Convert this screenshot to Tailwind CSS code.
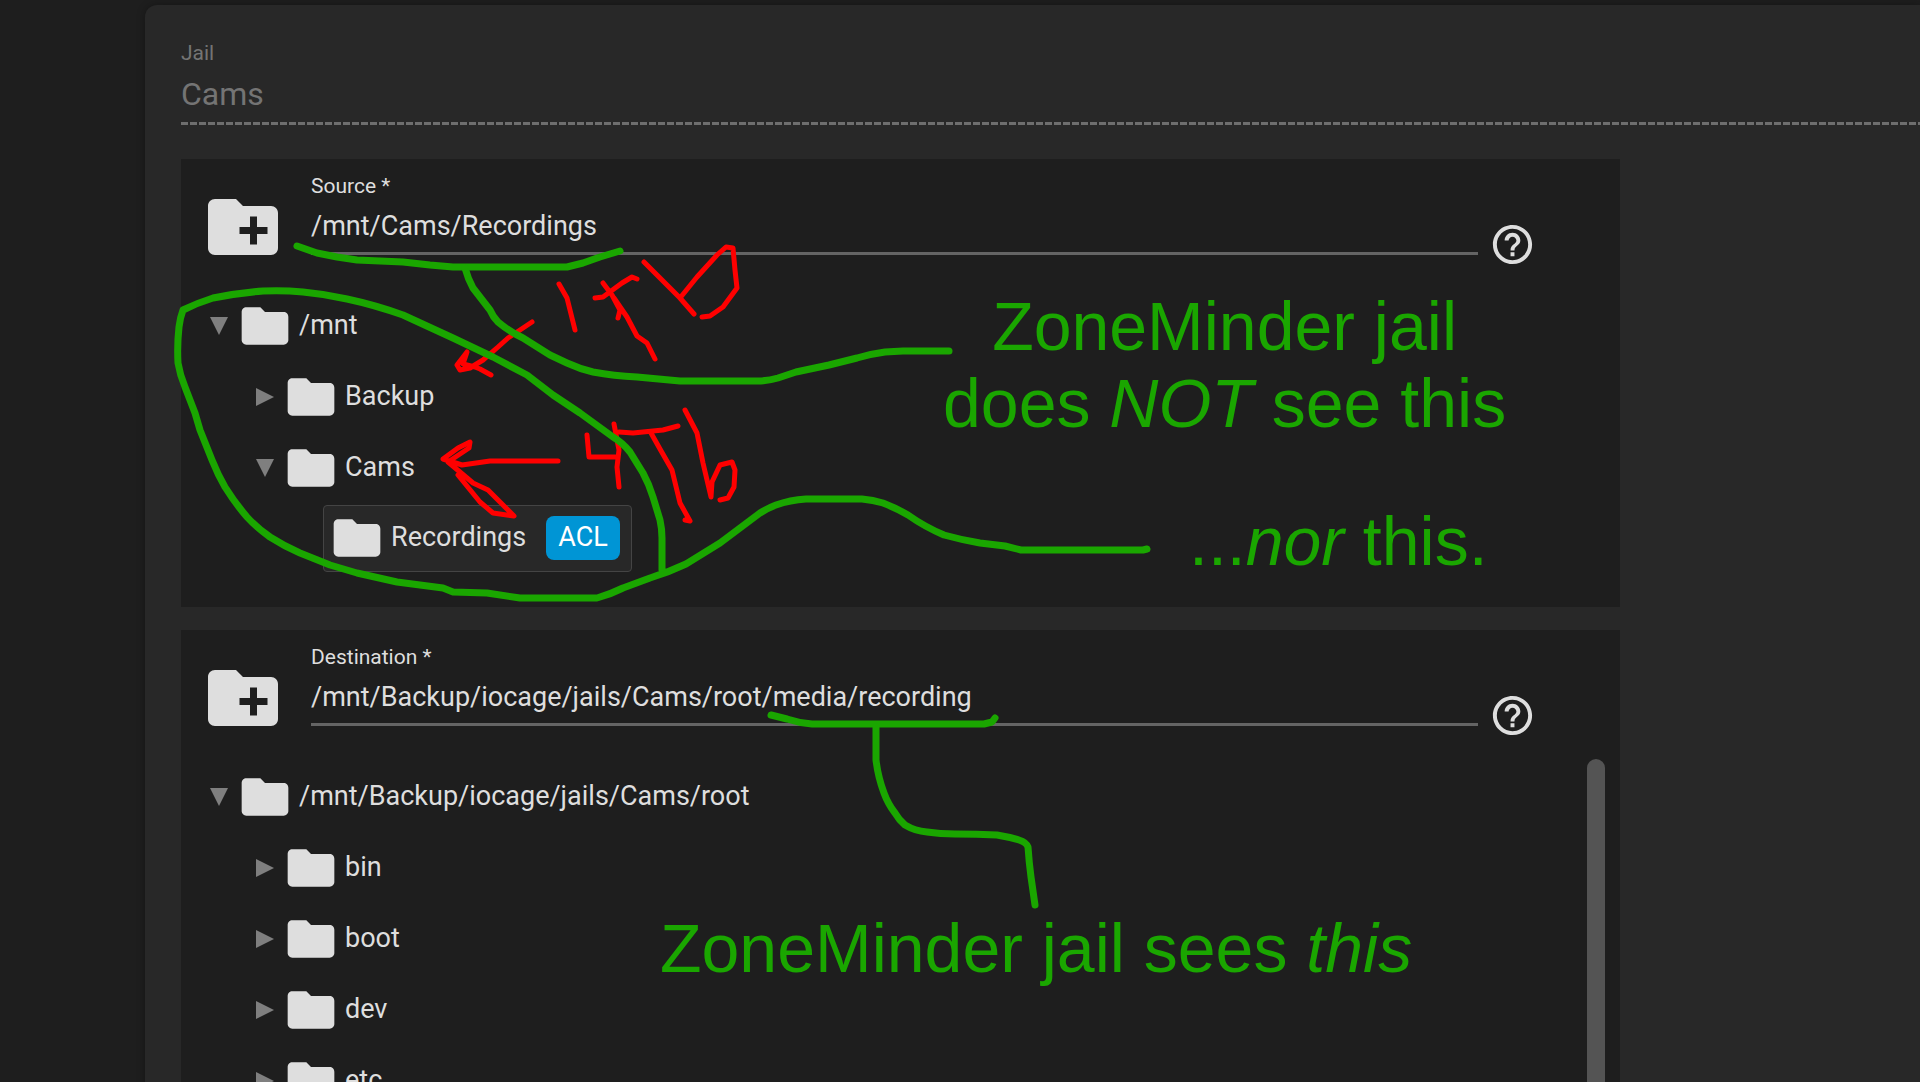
<!DOCTYPE html>
<html lang="en">
<head>
    <meta charset="UTF-8">
    <meta name="viewport" content="width=device-width, initial-scale=1.0">
    <title>Jail Mount Points</title>
    <script src="https://cdn.jsdelivr.net/npm/@tailwindcss/browser@4"></script>
    <style>
        body {
            font-family: Roboto, 'Noto Sans', sans-serif;
        }
    </style>
</head>
<body class="relative h-screen overflow-hidden bg-[#1e1e1e] text-[#dedede]">
    <!-- Shared icons -->
    <svg class="hidden">
        <symbol id="folder" viewBox="0 0 24 24"><path d="M10 4H4c-1.1 0-2 .9-2 2v12c0 1.1.9 2 2 2h16c1.1 0 2-.9 2-2V8c0-1.1-.9-2-2-2h-8l-2-2z"/></symbol>
        <symbol id="folder-add" viewBox="0 0 24 24"><path d="M20 6h-8l-2-2H4c-1.11 0-2 .89-2 2v12c0 1.11.89 2 2 2h16c1.11 0 2-.89 2-2V8c0-1.11-.89-2-2-2zm-1 8h-3v3h-2v-3h-3v-2h3V9h2v3h3v2z"/></symbol>
        <symbol id="help" viewBox="0 0 24 24"><path d="M11 18h2v-2h-2v2zm1-16C6.48 2 2 6.48 2 12s4.48 10 10 10 10-4.48 10-10S17.52 2 12 2zm0 18c-4.41 0-8-3.59-8-8s3.59-8 8-8 8 3.59 8 8-3.59 8-8 8zm0-14c-2.21 0-4 1.79-4 4h2c0-1.1.9-2 2-2s2 .9 2 2c0 2-3 1.75-3 5h2c0-2.25 3-2.5 3-5 0-2.21-1.79-4-4-4z"/></symbol>
        <symbol id="open" viewBox="0 0 18 18"><path d="M0 0h18L9 18z"/></symbol>
        <symbol id="closed" viewBox="0 0 18 18"><path d="M0 0v18l18-9z"/></symbol>
    </svg>

    <main class="mt-[5px] ml-[145px] min-h-screen rounded-tl-xl bg-[#282828] pt-9 pl-9 shadow-[0_0_8px_rgba(0,0,0,0.3)]">
        <!-- Jail -->
        <div class="flex flex-col">
            <label for="jail" class="text-[21px] leading-6 text-[#747474]">Jail</label>
            <input id="jail" type="text" value="Cams" disabled class="mt-[9px] mb-2 h-10 w-full bg-transparent text-[32px] leading-10 text-[#747474]">
            <div class="h-[3px] bg-[repeating-linear-gradient(to_right,#6e6e6e_0_7px,transparent_7px_9px)]"></div>
        </div>

        <!-- Source -->
        <section class="mt-[34px] w-full max-w-[1439px] bg-[#1e1e1e] pt-[15px] pb-[35px]">
            <div class="flex items-start pr-[84px] pl-5">
                <button type="button" aria-label="Browse source" class="mt-[11px]"><svg class="size-[84px] fill-current"><use href="#folder-add"/></svg></button>
                <div class="ml-[26px] flex flex-1 flex-col">
                    <label for="source" class="text-[21px] leading-6">Source *</label>
                    <input id="source" type="text" value="/mnt/Cams/Recordings" class="mt-[10px] h-[47px] w-full border-b-3 border-[#646464] bg-transparent pb-2 text-[27px] leading-9 outline-none">
                </div>
                <button type="button" aria-label="Help" class="mt-[47px] ml-[11px]"><svg class="size-[47px] fill-current"><use href="#help"/></svg></button>
            </div>
            <ul class="mt-[23px] flex flex-col gap-1 pl-[26px] text-[27px]">
                <li class="flex h-[67px] items-center">
                    <button type="button" aria-label="Collapse" class="flex w-6 justify-center text-[#7f7f7f]"><svg class="size-[18px] fill-current"><use href="#open"/></svg></button>
                    <div class="flex items-center gap-[6px] px-[6px]"><svg class="size-14 fill-current"><use href="#folder"/></svg><span>/mnt</span></div>
                </li>
                <li class="flex h-[67px] items-center pl-[46px]">
                    <button type="button" aria-label="Expand" class="flex w-6 justify-center text-[#7f7f7f]"><svg class="size-[18px] fill-current"><use href="#closed"/></svg></button>
                    <div class="flex items-center gap-[6px] px-[6px]"><svg class="size-14 fill-current"><use href="#folder"/></svg><span>Backup</span></div>
                </li>
                <li class="flex h-[67px] items-center pl-[46px]">
                    <button type="button" aria-label="Collapse" class="flex w-6 justify-center text-[#7f7f7f]"><svg class="size-[18px] fill-current"><use href="#open"/></svg></button>
                    <div class="flex items-center gap-[6px] px-[6px]"><svg class="size-14 fill-current"><use href="#folder"/></svg><span>Cams</span></div>
                </li>
                <li class="flex h-[67px] items-center pl-[116px]">
                    <div class="flex h-full items-center gap-[6px] rounded-sm border border-[#444444] bg-[#282828] pr-[11px] pb-[2px] pl-[5px]">
                        <svg class="size-14 fill-current"><use href="#folder"/></svg>
                        <span>Recordings</span>
                        <span class="ml-[14px] flex h-11 items-center rounded-lg bg-[#0095d5] px-3 text-white">ACL</span>
                    </div>
                </li>
            </ul>
        </section>

        <!-- Destination -->
        <section class="mt-[23px] w-full max-w-[1439px] bg-[#1e1e1e] pt-[15px]">
            <div class="flex items-start pr-[84px] pl-5">
                <button type="button" aria-label="Browse destination" class="mt-[11px]"><svg class="size-[84px] fill-current"><use href="#folder-add"/></svg></button>
                <div class="ml-[26px] flex flex-1 flex-col">
                    <label for="destination" class="text-[21px] leading-6">Destination *</label>
                    <input id="destination" type="text" value="/mnt/Backup/iocage/jails/Cams/root/media/recording" class="mt-[10px] h-[47px] w-full border-b-3 border-[#646464] bg-transparent pb-2 text-[27px] leading-9 outline-none">
                </div>
                <button type="button" aria-label="Help" class="mt-[47px] ml-[11px]"><svg class="size-[47px] fill-current"><use href="#help"/></svg></button>
            </div>
            <div class="mt-[19px] flex">
                <ul class="flex flex-1 flex-col gap-1 pt-1 pl-[26px] text-[27px]">
                    <li class="flex h-[67px] items-center">
                        <button type="button" aria-label="Collapse" class="flex w-6 justify-center text-[#7f7f7f]"><svg class="size-[18px] fill-current"><use href="#open"/></svg></button>
                        <div class="flex items-center gap-[6px] px-[6px]"><svg class="size-14 fill-current"><use href="#folder"/></svg><span>/mnt/Backup/iocage/jails/Cams/root</span></div>
                    </li>
                    <li class="flex h-[67px] items-center pl-[46px]">
                        <button type="button" aria-label="Expand" class="flex w-6 justify-center text-[#7f7f7f]"><svg class="size-[18px] fill-current"><use href="#closed"/></svg></button>
                        <div class="flex items-center gap-[6px] px-[6px]"><svg class="size-14 fill-current"><use href="#folder"/></svg><span>bin</span></div>
                    </li>
                    <li class="flex h-[67px] items-center pl-[46px]">
                        <button type="button" aria-label="Expand" class="flex w-6 justify-center text-[#7f7f7f]"><svg class="size-[18px] fill-current"><use href="#closed"/></svg></button>
                        <div class="flex items-center gap-[6px] px-[6px]"><svg class="size-14 fill-current"><use href="#folder"/></svg><span>boot</span></div>
                    </li>
                    <li class="flex h-[67px] items-center pl-[46px]">
                        <button type="button" aria-label="Expand" class="flex w-6 justify-center text-[#7f7f7f]"><svg class="size-[18px] fill-current"><use href="#closed"/></svg></button>
                        <div class="flex items-center gap-[6px] px-[6px]"><svg class="size-14 fill-current"><use href="#folder"/></svg><span>dev</span></div>
                    </li>
                    <li class="flex h-[67px] items-center pl-[46px]">
                        <button type="button" aria-label="Expand" class="flex w-6 justify-center text-[#7f7f7f]"><svg class="size-[18px] fill-current"><use href="#closed"/></svg></button>
                        <div class="flex items-center gap-[6px] px-[6px]"><svg class="size-14 fill-current"><use href="#folder"/></svg><span>etc</span></div>
                    </li>
                </ul>
                <div class="mr-[15px] w-[18px] rounded-full bg-[#545454]"></div>
            </div>
        </section>
    </main>

    <!-- Pen marks and notes -->
    <svg class="pointer-events-none absolute top-0 left-0 h-[1082px] w-[1920px] fill-none" stroke-linecap="round" stroke-linejoin="round">
        <g stroke="#ff0000" stroke-width="5">
            <path d="M559 284L567 298L575 330"/>
            <path d="M595 298L603 297L622 283L632 277L637 279M603 283L612 295L620 310L618 318M614 298L627 317L637 336L647 343L655 359"/>
            <path d="M644 262L657 275L680 298L694 314M680 298L697 277L717 255L726 247L733 248L735 270L737 288L723 307L710 316L702 317"/>
            <path d="M532 322L520 330L508 338L498 347L483 360L470 368L460 370L457 365L467 352L463 364L475 367L480 369L491 375"/>
            <path d="M558 461L490 461L462 465L443 459L458 448L470 442L469 448L448 462L460 472L473 483L488 490L514 516L493 513L480 502L458 475"/>
            <path d="M587 435L589 457L617 457M614 424L619 450L617 467L619 487"/>
            <path d="M619 432L633 433L663 430L678 426M651 433L660 449L672 470L680 503L690 521L685 520"/>
            <path d="M685 410L697 433L703 463L711 497L712 482L720 465L732 462L735 470L734 487L728 498L720 500"/>
        </g>
        <g stroke="#1aa600" stroke-width="7">
            <path d="M297 246L317 253L337 257L357 260L403 262L430 265L453 267H567L583 263L600 257L620 251"/>
            <path d="M465 268Q468 279 473 288L490 310Q493 317 498 322Q510 332 523 338L550 355L567 363Q580 369 593 372Q614 376 637 377L680 381H758Q768 381 778 378L796 372L829 365L857 358Q870 354 885 352L903 351H949"/>
            <path d="M662 570V538Q662 529 660 520L653 497Q649 484 643 473L630 452Q623 443 613 437L580 413L553 395L527 375L493 357L453 338L403 315Q375 305 347 299Q325 294 303 292Q283 290 263 291Q238 293 213 298Q197 303 183 310Q180 318 179 327Q177 345 178 363Q180 375 185 387Q190 400 195 413L200 430L212 460Q218 475 225 487Q235 503 247 517Q257 528 270 537Q284 546 300 553L330 565L357 573L397 582L443 588L453 592L487 593L520 598H597Q611 594 623 588L650 578Q669 572 686 564L720 543L740 528L760 513Q768 508 776 505Q790 500 806 499H862Q873 500 883 503Q896 508 908 515Q925 527 944 535Q962 540 980 543L1005 546L1021 550H1143L1147 549"/>
            <path d="M771 715L787 719Q799 723 812 724H984L992 722L995 718"/>
            <path d="M876 727V760Q878 777 884 793Q888 804 895 813Q899 820 905 825Q915 831 927 832Q940 834 955 834Q977 834 997 835Q1009 837 1019 840Q1026 842 1028 847Q1029 862 1031 877L1035 905"/>
        </g>
    </svg>
    <div class="pointer-events-none font-['Liberation_Sans',sans-serif] text-[68px] leading-[77px] whitespace-nowrap text-[#1aa600]">
        <p class="absolute top-[288px] left-[943px] text-center">ZoneMinder jail<br>does <em>NOT</em> see this</p>
        <p class="absolute top-[503px] left-[1189px]">...<em>nor</em> this.</p>
        <p class="absolute top-[910px] left-[660px]">ZoneMinder jail sees <em>this</em></p>
    </div>
</body>
</html>
